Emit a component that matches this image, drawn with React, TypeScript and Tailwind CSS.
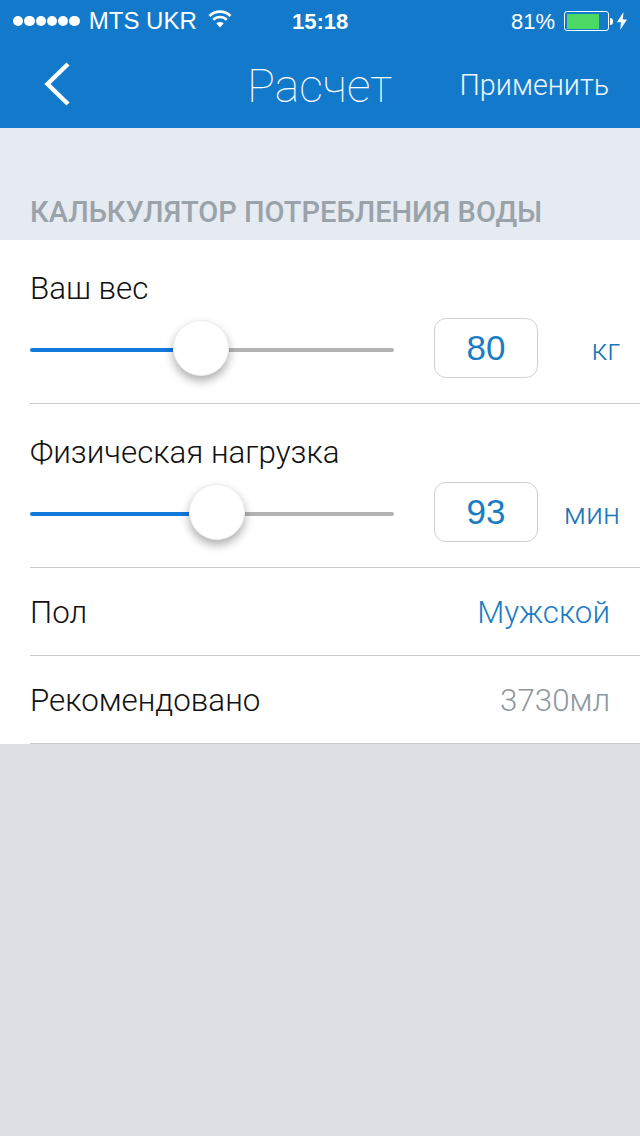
const SANS = "font-['Liberation_Sans',Arial,sans-serif]";
const LIGHT = "font-['Roboto',sans-serif] font-light";

function Wifi() {
  return (
    <svg width="24" height="20" viewBox="0 0 24 20" fill="none" stroke="white" strokeWidth="2.6">
      <path d="M1.5 7 C7 1.2 17 1.2 22.5 7" />
      <path d="M5.2 10.8 C9 7 15 7 18.8 10.8" />
      <path d="M12 18.5 L8.4 14.4 C10.4 12.6 13.6 12.6 15.6 14.4 Z" fill="white" stroke="none" />
    </svg>
  );
}

function Bolt() {
  return (
    <svg width="10" height="18" viewBox="0 0 10 18" fill="white">
      <path d="M6.5 0 L0 10.2 H4 L3.2 18 L10 7.4 H5.8 Z" />
    </svg>
  );
}

function SliderRow({ label, value, unit, filled }: { label: string; value: string; unit: string; filled: number }) {
  return (
    <div className="ml-[30px] h-[164px] border-b border-[#c9cbcd] flex flex-col">
      <div className={`${LIGHT} mt-[31px] h-9 leading-9 text-[31.3px] text-[#111]`}>{label}</div>
      <div className="flex items-center mt-[11px]">
        <div className="w-[364px] flex items-center">
          <div className="h-1 bg-[#1278dc] rounded-l-full mt-1" style={{ width: filled }} />
          <div className="w-14 h-14 shrink-0 rounded-full bg-white border border-[#eee] shadow-[0_5px_10px_rgba(0,0,0,0.32)] z-10" />
          <div className="h-1 flex-1 bg-[#b3b3b3] rounded-r-full mt-1" />
        </div>
        <div className="ml-10 w-[104px] h-[60px] rounded-[12px] border border-[#cfd0d2] flex items-center justify-center pt-[1px] text-[35px] text-[#1a7cc4]">
          {value}
        </div>
        <div className={`${LIGHT} w-[82px] pt-1 text-right text-[30.3px] text-[#1a76b8]`}>{unit}</div>
      </div>
    </div>
  );
}

export default function App() {
  return (
    <div className={`${SANS} w-[640px] h-[1136px] bg-[#dcdfe3] flex flex-col overflow-hidden`}>
      {/* status bar + nav */}
      <div className="h-32 bg-[#137acb] text-white flex flex-col">
        <div className="h-[42px] relative flex items-center pl-[13px] pr-[13px] text-[24px]">
          <div className="flex gap-[1px] mr-[9px]">
            {[0, 1, 2, 3, 4, 5].map((i) => (
              <div key={i} className="w-[10.3px] h-[10.3px] rounded-full bg-white" />
            ))}
          </div>
          <span>MTS UKR</span>
          <span className="ml-[11px] -mt-1"><Wifi /></span>
          <span className="absolute left-[292px] font-bold text-[22px]">15:18</span>
          <div className="ml-auto flex items-center">
            <span className="mr-[9px] text-[22px]">81%</span>
            <div className="w-[45px] h-[20px] rounded-[3px] border border-white p-[1.5px]">
              <div className="w-[32px] h-full bg-[#4cd964]" />
            </div>
            <div className="w-[3px] h-[7px] bg-white rounded-r-full ml-[1px]" />
            <span className="ml-[4px]"><Bolt /></span>
          </div>
        </div>
        <div className="flex-1 relative flex items-center justify-center">
          <svg className="absolute left-[44px] top-[20px]" width="26" height="44" viewBox="0 0 26 44" fill="none" stroke="white" strokeWidth="4.4">
            <path d="M24 2 L3.5 22 L24 42" />
          </svg>
          <span className="absolute left-[247px] top-[18px] font-['Roboto',sans-serif] font-thin text-[46.5px] leading-[52px]">Расчет</span>
          <span className={`${LIGHT} absolute right-[31px] top-[25px] text-[28.7px] leading-9 text-[#eef6fc]`}>Применить</span>
        </div>
      </div>

      {/* section header */}
      <div className="h-28 bg-[#e6eaf1] flex items-end pl-[30px] pb-[10px]">
        <span className="font-['Roboto',sans-serif] font-medium text-[29px] leading-9 text-[#9aa2aa]">КАЛЬКУЛЯТОР ПОТРЕБЛЕНИЯ ВОДЫ</span>
      </div>

      {/* form */}
      <div className="bg-white h-[504px]">
        <SliderRow label="Ваш вес" value="80" unit="кг" filled={143} />
        <SliderRow label="Физическая нагрузка" value="93" unit="мин" filled={159} />
        <div className={`${LIGHT} ml-[30px] h-[88px] border-b border-[#c9cbcd] flex items-center justify-between pr-[30px] pt-1 text-[31.3px]`}>
          <span className="text-[#111]">Пол</span>
          <span className="text-[#1a7cc4]">Мужской</span>
        </div>
        <div className={`${LIGHT} ml-[30px] h-[88px] border-b border-[#c9cbcd] flex items-center justify-between pr-[30px] pt-1 text-[31.3px]`}>
          <span className="text-[#111]">Рекомендовано</span>
          <span className="text-[#8e979f]">3730мл</span>
        </div>
      </div>
    </div>
  );
}
